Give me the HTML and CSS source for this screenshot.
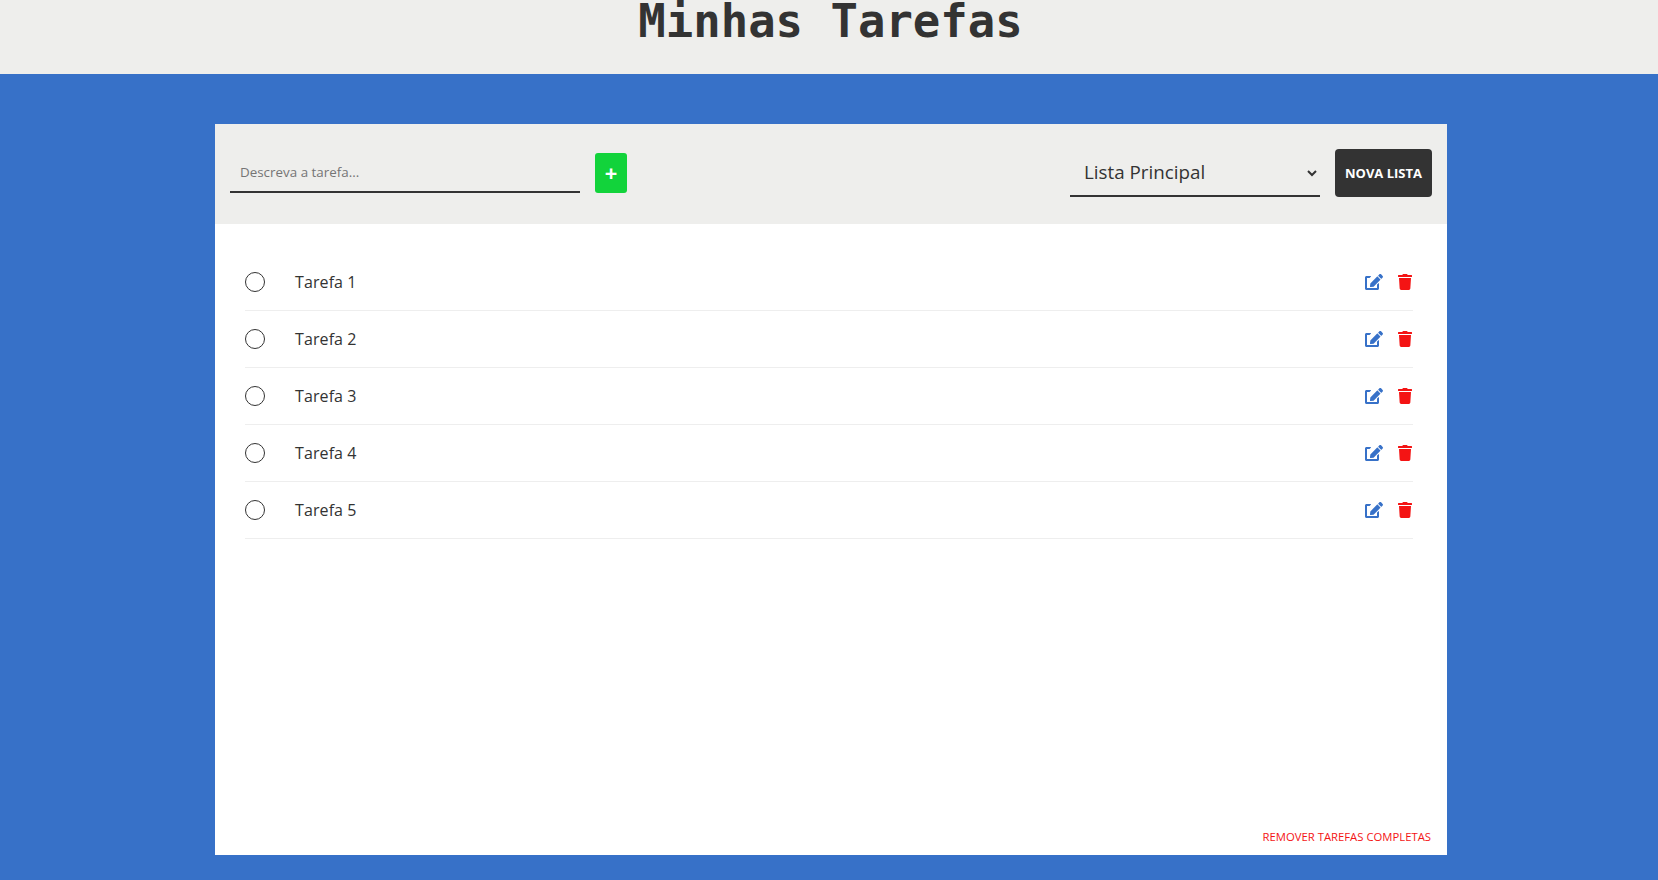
FILE: index.html
```html
<!DOCTYPE html>
<html lang="pt-BR">
<head>
    <meta charset="UTF-8">
    <meta name="viewport" content="width=device-width, initial-scale=1.0">
    <title>Minhas Tarefas</title>
    <link rel="stylesheet" href="styles.css">
</head>
<body>
    <header class="topo">
        <h1 class="titulo">Minhas Tarefas</h1>
    </header>
    <main class="quadro">
        <div class="barra">
            <form class="nova-tarefa">
                <input class="campo" type="text" placeholder="Descreva a tarefa...">
                <button class="btn-add" type="button">+</button>
            </form>
            <div class="listas">
                <select class="select-lista">
                    <option>Lista Principal</option>
                </select>
                <button class="btn-lista" type="button">NOVA LISTA</button>
            </div>
        </div>
        <ul class="tarefas">
            <li class="tarefa">
                <span class="check"></span>
                <span class="nome">Tarefa 1</span>
                <button class="icone azul" type="button"><svg class="svg-edit" viewBox="0 0 576 512"><path d="M402.6 83.2l90.2 90.2c3.8 3.8 3.8 10 0 13.8L274.4 405.6l-92.8 10.3c-12.4 1.4-22.9-9.1-21.5-21.5l10.3-92.8L388.8 83.2c3.8-3.8 10-3.8 13.8 0zm162-22.9l-48.8-48.8c-15.2-15.2-39.9-15.2-55.2 0l-35.4 35.4c-3.8 3.8-3.8 10 0 13.8l90.2 90.2c3.8 3.8 10 3.8 13.8 0l35.4-35.4c15.2-15.3 15.2-40 0-55.2zM384 346.2V448H64V128h73.9c3.2 0 6.2-1.3 8.5-3.5l40-40c7.6-7.6 2.2-20.5-8.5-20.5H48C21.5 64 0 85.5 0 112v352c0 26.5 21.5 48 48 48h352c26.5 0 48-21.5 48-48V306.2c0-10.7-12.9-16-20.5-8.5l-40 40c-2.2 2.3-3.5 5.3-3.5 8.5z"/></svg></button>
                <button class="icone vermelho" type="button"><svg class="svg-lixo" viewBox="0 0 448 512"><path d="M432 32H312l-9.4-18.7A24 24 0 0 0 281.1 0H166.8a23.72 23.72 0 0 0-21.4 13.3L136 32H16A16 16 0 0 0 0 48v32a16 16 0 0 0 16 16h416a16 16 0 0 0 16-16V48a16 16 0 0 0-16-16zM53.2 467a48 48 0 0 0 47.9 45h245.8a48 48 0 0 0 47.9-45L416 128H32z"/></svg></button>
            </li>
            <li class="tarefa">
                <span class="check"></span>
                <span class="nome">Tarefa 2</span>
                <button class="icone azul" type="button"><svg class="svg-edit" viewBox="0 0 576 512"><path d="M402.6 83.2l90.2 90.2c3.8 3.8 3.8 10 0 13.8L274.4 405.6l-92.8 10.3c-12.4 1.4-22.9-9.1-21.5-21.5l10.3-92.8L388.8 83.2c3.8-3.8 10-3.8 13.8 0zm162-22.9l-48.8-48.8c-15.2-15.2-39.9-15.2-55.2 0l-35.4 35.4c-3.8 3.8-3.8 10 0 13.8l90.2 90.2c3.8 3.8 10 3.8 13.8 0l35.4-35.4c15.2-15.3 15.2-40 0-55.2zM384 346.2V448H64V128h73.9c3.2 0 6.2-1.3 8.5-3.5l40-40c7.6-7.6 2.2-20.5-8.5-20.5H48C21.5 64 0 85.5 0 112v352c0 26.5 21.5 48 48 48h352c26.5 0 48-21.5 48-48V306.2c0-10.7-12.9-16-20.5-8.5l-40 40c-2.2 2.3-3.5 5.3-3.5 8.5z"/></svg></button>
                <button class="icone vermelho" type="button"><svg class="svg-lixo" viewBox="0 0 448 512"><path d="M432 32H312l-9.4-18.7A24 24 0 0 0 281.1 0H166.8a23.72 23.72 0 0 0-21.4 13.3L136 32H16A16 16 0 0 0 0 48v32a16 16 0 0 0 16 16h416a16 16 0 0 0 16-16V48a16 16 0 0 0-16-16zM53.2 467a48 48 0 0 0 47.9 45h245.8a48 48 0 0 0 47.9-45L416 128H32z"/></svg></button>
            </li>
            <li class="tarefa">
                <span class="check"></span>
                <span class="nome">Tarefa 3</span>
                <button class="icone azul" type="button"><svg class="svg-edit" viewBox="0 0 576 512"><path d="M402.6 83.2l90.2 90.2c3.8 3.8 3.8 10 0 13.8L274.4 405.6l-92.8 10.3c-12.4 1.4-22.9-9.1-21.5-21.5l10.3-92.8L388.8 83.2c3.8-3.8 10-3.8 13.8 0zm162-22.9l-48.8-48.8c-15.2-15.2-39.9-15.2-55.2 0l-35.4 35.4c-3.8 3.8-3.8 10 0 13.8l90.2 90.2c3.8 3.8 10 3.8 13.8 0l35.4-35.4c15.2-15.3 15.2-40 0-55.2zM384 346.2V448H64V128h73.9c3.2 0 6.2-1.3 8.5-3.5l40-40c7.6-7.6 2.2-20.5-8.5-20.5H48C21.5 64 0 85.5 0 112v352c0 26.5 21.5 48 48 48h352c26.5 0 48-21.5 48-48V306.2c0-10.7-12.9-16-20.5-8.5l-40 40c-2.2 2.3-3.5 5.3-3.5 8.5z"/></svg></button>
                <button class="icone vermelho" type="button"><svg class="svg-lixo" viewBox="0 0 448 512"><path d="M432 32H312l-9.4-18.7A24 24 0 0 0 281.1 0H166.8a23.72 23.72 0 0 0-21.4 13.3L136 32H16A16 16 0 0 0 0 48v32a16 16 0 0 0 16 16h416a16 16 0 0 0 16-16V48a16 16 0 0 0-16-16zM53.2 467a48 48 0 0 0 47.9 45h245.8a48 48 0 0 0 47.9-45L416 128H32z"/></svg></button>
            </li>
            <li class="tarefa">
                <span class="check"></span>
                <span class="nome">Tarefa 4</span>
                <button class="icone azul" type="button"><svg class="svg-edit" viewBox="0 0 576 512"><path d="M402.6 83.2l90.2 90.2c3.8 3.8 3.8 10 0 13.8L274.4 405.6l-92.8 10.3c-12.4 1.4-22.9-9.1-21.5-21.5l10.3-92.8L388.8 83.2c3.8-3.8 10-3.8 13.8 0zm162-22.9l-48.8-48.8c-15.2-15.2-39.9-15.2-55.2 0l-35.4 35.4c-3.8 3.8-3.8 10 0 13.8l90.2 90.2c3.8 3.8 10 3.8 13.8 0l35.4-35.4c15.2-15.3 15.2-40 0-55.2zM384 346.2V448H64V128h73.9c3.2 0 6.2-1.3 8.5-3.5l40-40c7.6-7.6 2.2-20.5-8.5-20.5H48C21.5 64 0 85.5 0 112v352c0 26.5 21.5 48 48 48h352c26.5 0 48-21.5 48-48V306.2c0-10.7-12.9-16-20.5-8.5l-40 40c-2.2 2.3-3.5 5.3-3.5 8.5z"/></svg></button>
                <button class="icone vermelho" type="button"><svg class="svg-lixo" viewBox="0 0 448 512"><path d="M432 32H312l-9.4-18.7A24 24 0 0 0 281.1 0H166.8a23.72 23.72 0 0 0-21.4 13.3L136 32H16A16 16 0 0 0 0 48v32a16 16 0 0 0 16 16h416a16 16 0 0 0 16-16V48a16 16 0 0 0-16-16zM53.2 467a48 48 0 0 0 47.9 45h245.8a48 48 0 0 0 47.9-45L416 128H32z"/></svg></button>
            </li>
            <li class="tarefa">
                <span class="check"></span>
                <span class="nome">Tarefa 5</span>
                <button class="icone azul" type="button"><svg class="svg-edit" viewBox="0 0 576 512"><path d="M402.6 83.2l90.2 90.2c3.8 3.8 3.8 10 0 13.8L274.4 405.6l-92.8 10.3c-12.4 1.4-22.9-9.1-21.5-21.5l10.3-92.8L388.8 83.2c3.8-3.8 10-3.8 13.8 0zm162-22.9l-48.8-48.8c-15.2-15.2-39.9-15.2-55.2 0l-35.4 35.4c-3.8 3.8-3.8 10 0 13.8l90.2 90.2c3.8 3.8 10 3.8 13.8 0l35.4-35.4c15.2-15.3 15.2-40 0-55.2zM384 346.2V448H64V128h73.9c3.2 0 6.2-1.3 8.5-3.5l40-40c7.6-7.6 2.2-20.5-8.5-20.5H48C21.5 64 0 85.5 0 112v352c0 26.5 21.5 48 48 48h352c26.5 0 48-21.5 48-48V306.2c0-10.7-12.9-16-20.5-8.5l-40 40c-2.2 2.3-3.5 5.3-3.5 8.5z"/></svg></button>
                <button class="icone vermelho" type="button"><svg class="svg-lixo" viewBox="0 0 448 512"><path d="M432 32H312l-9.4-18.7A24 24 0 0 0 281.1 0H166.8a23.72 23.72 0 0 0-21.4 13.3L136 32H16A16 16 0 0 0 0 48v32a16 16 0 0 0 16 16h416a16 16 0 0 0 16-16V48a16 16 0 0 0-16-16zM53.2 467a48 48 0 0 0 47.9 45h245.8a48 48 0 0 0 47.9-45L416 128H32z"/></svg></button>
            </li>
        </ul>
        <div class="rodape">
            <button class="btn-remover" type="button">REMOVER TAREFAS COMPLETAS</button>
        </div>
    </main>
</body>
</html>
```

FILE: styles.css
```css
* {
    box-sizing: border-box;
}
body {
    margin: 0;
    height: 880px;
    overflow: hidden;
    display: flex;
    flex-direction: column;
    background-color: #3771c8;
    font-family: "Open Sans", sans-serif;
    color: #333;
}
.topo {
    height: 74px;
    flex-shrink: 0;
    padding-left: 3px;
    background-color: #eeeeec;
    text-align: center;
}
.titulo {
    margin: 0;
    font-family: "DejaVu Sans Mono", monospace;
    font-size: 45.6px;
    font-weight: bold;
    line-height: 44px;
    color: #333;
}
.quadro {
    width: 1232px;
    height: 731px;
    margin: 50px 0 0 215px;
    display: flex;
    flex-direction: column;
    background-color: #fff;
}
.barra {
    height: 100px;
    flex-shrink: 0;
    padding: 0 15px 2px;
    display: flex;
    align-items: center;
    justify-content: space-between;
    background-color: #eeeeec;
}
.nova-tarefa {
    display: flex;
    align-items: flex-end;
    gap: 15px;
}
.campo {
    width: 350px;
    height: 40px;
    padding: 0 10px;
    border: none;
    border-bottom: 2px solid #333;
    background: transparent;
    font-family: "Open Sans", sans-serif;
    font-size: 13.4px;
    color: #333;
    outline: none;
}
.btn-add {
    width: 32px;
    height: 40px;
    padding: 0 0 3px;
    border: none;
    border-radius: 3px;
    background-color: #12d33b;
    color: #fff;
    font-family: "Open Sans", sans-serif;
    font-size: 22px;
    font-weight: bold;
    line-height: 1;
}
.listas {
    display: flex;
    align-items: flex-end;
    gap: 15px;
}
.select-lista {
    width: 250px;
    height: 48px;
    padding: 0 10px;
    border: none;
    border-bottom: 2px solid #333;
    border-radius: 0;
    background-color: transparent;
    font-family: "Open Sans", sans-serif;
    font-size: 18.8px;
    font-weight: 500;
    color: #333;
    outline: none;
}
.btn-lista {
    width: 97px;
    height: 48px;
    padding: 0;
    border: none;
    border-radius: 4px;
    background-color: #333;
    color: #fff;
    font-family: "Open Sans", sans-serif;
    font-size: 13px;
    font-weight: bold;
}
.tarefas {
    flex: 1;
    margin: 0;
    padding: 30px 34px 0 30px;
    list-style: none;
}
.tarefa {
    height: 57px;
    display: flex;
    align-items: center;
    border-bottom: 1px solid #eee;
}
.check {
    width: 20px;
    height: 20px;
    margin-right: 30px;
    border: 1px solid #333;
    border-radius: 50%;
    flex-shrink: 0;
}
.nome {
    flex: 1;
    font-size: 16px;
    letter-spacing: 0.1px;
    color: #333;
}
.icone {
    padding: 0;
    border: none;
    background: none;
    display: flex;
    fill: currentColor;
}
.azul {
    color: #3771c8;
    margin-right: 15px;
}
.vermelho {
    color: #f41414;
    margin-right: 1px;
}
.svg-edit {
    width: 18px;
    height: 16px;
}
.svg-lixo {
    width: 14px;
    height: 16px;
}
.rodape {
    height: 26px;
    padding-right: 16px;
    display: flex;
    align-items: flex-start;
    justify-content: flex-end;
}
.btn-remover {
    padding: 0;
    border: none;
    background: none;
    color: #f41414;
    font-family: "Open Sans", sans-serif;
    font-size: 11.3px;
}
```
